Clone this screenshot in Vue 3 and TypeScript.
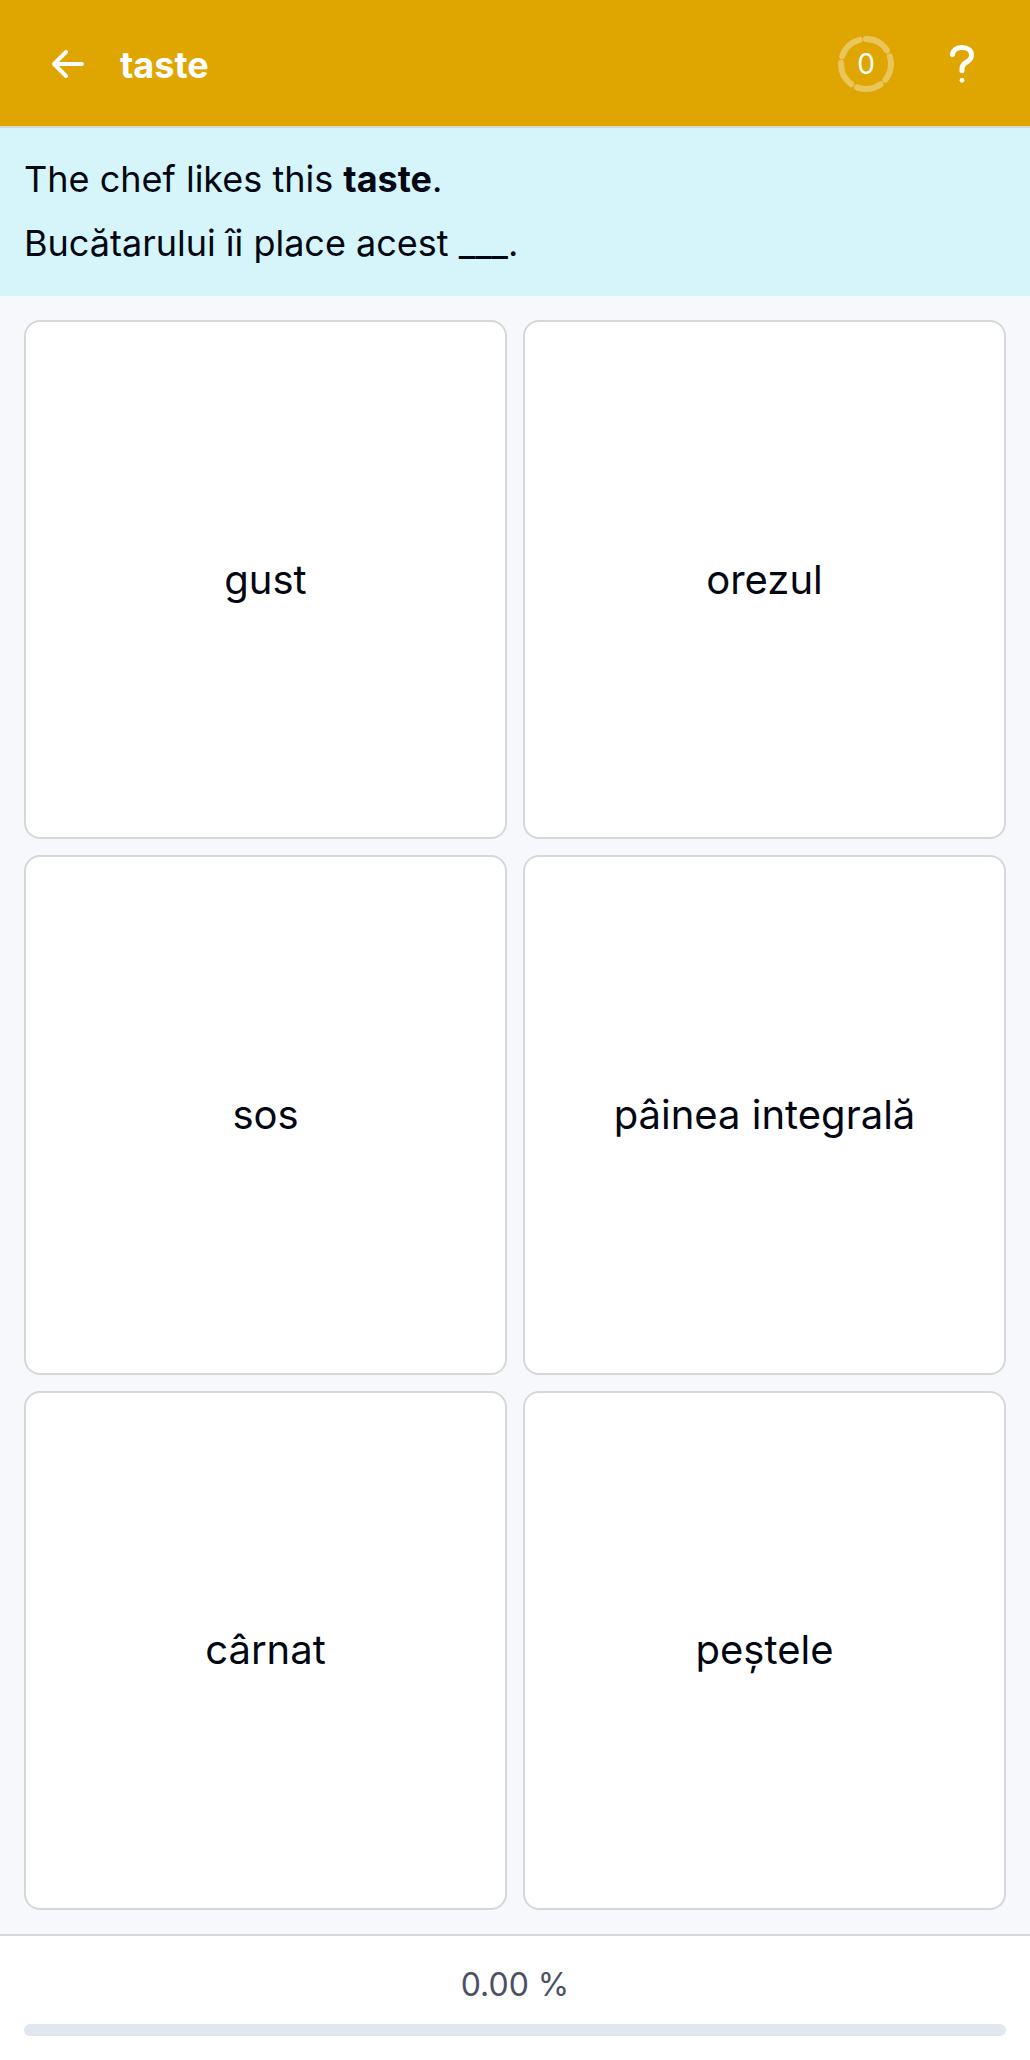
<script setup lang="ts">
import { ref } from 'vue'

const word = 'taste'
const options: string[] = ['gust', 'orezul', 'sos', 'pâinea integrală', 'cârnat', 'peștele']
const score = ref(0)
const progress = ref(0)
</script>

<template>
  <div class="page">
    <header class="topbar">
      <button class="icon-button" type="button" aria-label="Back">
        <svg width="56" height="56" viewBox="0 0 56 56" fill="none" stroke="currentColor" stroke-width="4" stroke-linecap="round" stroke-linejoin="round">
          <path d="M42 28H14M26 16L14 28L26 40" />
        </svg>
      </button>
      <h1 class="title">{{ word }}</h1>
      <div class="score">
        <svg class="ring" width="56" height="56" viewBox="0 0 56 56" fill="none" aria-hidden="true">
          <circle cx="28" cy="28" r="25" pathLength="360" stroke="#fff" stroke-opacity="0.36" stroke-width="6" stroke-linecap="round" stroke-dasharray="57 15" transform="rotate(-90 28 28)" />
        </svg>
        <span class="score-value">{{ score }}</span>
      </div>
      <button class="icon-button" type="button" aria-label="Help">
        <svg width="56" height="56" viewBox="0 0 56 56" fill="none">
          <path d="M18.5 18.5C19 14 23 11.5 28 11.5C33.5 11.5 37.5 14.5 37.5 19C37.5 22.5 35.5 24.5 32.5 26.2C29.5 28 28 29.5 28 32.5V34.8" stroke="currentColor" stroke-width="5" stroke-linecap="round" stroke-linejoin="round" />
          <circle cx="28" cy="44.3" r="2.4" fill="currentColor" />
        </svg>
      </button>
    </header>

    <section class="prompt">
      <p>The chef likes this <strong>{{ word }}</strong>.</p>
      <p lang="ro">Bucătarului îi place acest ___.</p>
    </section>

    <main class="options" lang="ro">
      <button v-for="option in options" :key="option" class="card" type="button">{{ option }}</button>
    </main>

    <footer class="footer">
      <span id="progress-label" class="percent">{{ progress.toFixed(2) }} %</span>
      <div class="track" role="progressbar" aria-labelledby="progress-label" :aria-valuenow="progress">
        <div class="fill" :style="{ width: progress + '%' }"></div>
      </div>
    </footer>
  </div>
</template>

<style>
body {
  margin: 0;
  background: #f6f8fb;
}
</style>

<style scoped>
* {
  box-sizing: border-box;
}

.page {
  display: flex;
  flex-direction: column;
  min-height: 100vh;
  background: #f6f8fb;
  color: #030712;
  font-family: Inter, "Liberation Sans", sans-serif;
}

.topbar {
  display: flex;
  align-items: center;
  height: 128px;
  padding: 2px 40px 0;
  border-bottom: 2px solid #d6d7da;
  background: #dfa500;
  color: #fff;
}

.icon-button {
  display: flex;
  padding: 0;
  border: 0;
  background: none;
  color: inherit;
  cursor: pointer;
}

.title {
  flex: 1;
  margin: 0 24px;
  padding-top: 2px;
  font-size: 36px;
  line-height: 56px;
  font-weight: 700;
}

.score {
  display: grid;
  place-items: center;
  margin-right: 40px;
}

.ring,
.score-value {
  grid-area: 1 / 1;
}

.score-value {
  font-size: 28px;
  line-height: 40px;
  font-weight: 400;
}

.prompt {
  display: flex;
  flex-direction: column;
  gap: 8px;
  padding: 23px 24px 25px;
  background: #d5f5fa;
  font-size: 36px;
  line-height: 56px;
}

.prompt p {
  margin: 0;
}

.prompt strong {
  font-weight: 700;
}

.options {
  flex: 1;
  display: grid;
  grid-template-columns: 1fr 1fr;
  grid-auto-rows: 1fr;
  gap: 16px;
  padding: 24px;
}

.card {
  min-width: 0;
  padding: 24px;
  border: 2px solid #d6d7da;
  border-radius: 16px;
  background: #fff;
  color: inherit;
  font-family: inherit;
  font-size: 40px;
  line-height: 56px;
  cursor: pointer;
}

.footer {
  display: flex;
  flex-direction: column;
  gap: 14px;
  padding: 24px;
  border-top: 2px solid #d6d7da;
  background: #fff;
}

.percent {
  color: #4b5162;
  font-size: 32px;
  line-height: 50px;
  text-align: center;
}

.track {
  height: 12px;
  border-radius: 6px;
  background: #e2e6ee;
  overflow: hidden;
}

.fill {
  height: 100%;
  background: #dfa500;
}
</style>
